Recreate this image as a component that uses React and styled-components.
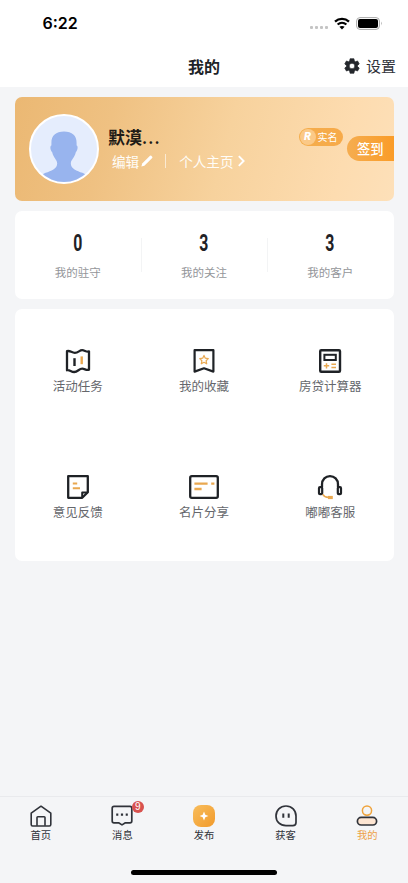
import styled, { createGlobalStyle } from 'styled-components'

const GlobalStyle = createGlobalStyle`
  * {
    box-sizing: border-box;
  }
  body {
    margin: 0;
    background: #f4f5f7;
    font-family: 'Noto Sans CJK SC', sans-serif;
  }
`

const stats = [
  { value: 0, label: '我的驻守' },
  { value: 3, label: '我的关注' },
  { value: 3, label: '我的客户' },
]

const MapIcon = () => (
  <svg width='26' height='26' viewBox='0 0 26 26' fill='none' strokeLinejoin='round'>
    <path
      d='M2 3.2C5 2.2 6.6 4.8 9.8 4.8 13.6 4.8 14.2 2.2 17.2 2.2 19.8 2.2 21.4 4.4 24 3.4V21.6C21.4 22.8 19.8 20.6 17.2 20.6 14 20.6 12.8 24 9.2 24 6 24 4.6 21.4 2 22.2Z'
      stroke='#1f2226'
      strokeWidth='2.3'
    />
    <path d='M9.5 10.2V18' stroke='#1f2226' strokeWidth='2.4' />
    <path d='M16.7 8.4V16.2' stroke='#e9a850' strokeWidth='2.4' />
  </svg>
)

const BookmarkIcon = () => (
  <svg width='26' height='26' viewBox='0 0 26 26' fill='none' strokeLinejoin='round'>
    <path d='M3.6 2.2H22.4V23.6L13 20.3 3.6 23.6Z' stroke='#1f2226' strokeWidth='2.2' />
    <path
      d='M13 7.4L14.3 10.2 17.3 10.6 15.1 12.7 15.7 15.8 13 14.3 10.3 15.8 10.9 12.7 8.7 10.6 11.7 10.2Z'
      stroke='#e9a850'
      strokeWidth='1.2'
    />
  </svg>
)

const CalculatorIcon = () => (
  <svg width='26' height='26' viewBox='0 0 26 26' fill='none'>
    <rect x='3.2' y='2.2' width='19.8' height='21.6' rx='1' stroke='#1f2226' strokeWidth='2.4' />
    <rect x='7.4' y='6.8' width='11.4' height='5.2' stroke='#1f2226' strokeWidth='2' />
    <path d='M6.8 17.8H12.2M9.5 15.2V20.4M14.4 16.2H19M14.4 19.6H19' stroke='#e9a850' strokeWidth='1.5' />
  </svg>
)

const NoteIcon = () => (
  <svg width='26' height='26' viewBox='0 0 26 26' fill='none' strokeLinejoin='round'>
    <path d='M3.2 2.2H22.8V18.2L17.2 23.8H3.2Z' stroke='#1f2226' strokeWidth='2.3' />
    <path d='M17.2 23.6V18.4H22.6' stroke='#1f2226' strokeWidth='2' />
    <path d='M7.8 9.6H12.2M7.8 14.2H15' stroke='#e9a850' strokeWidth='2' />
  </svg>
)

const CardIcon = () => (
  <svg width='32' height='26' viewBox='0 0 32 26' fill='none'>
    <rect x='2.2' y='2.2' width='27.6' height='21.6' rx='1.6' stroke='#1f2226' strokeWidth='2.3' />
    <path d='M6.4 9.6H19.6M23.2 9.6H26.4M6.4 15H13.6' stroke='#e9a850' strokeWidth='2.3' />
  </svg>
)

const HeadsetIcon = () => (
  <svg width='26' height='26' viewBox='0 0 26 26' fill='none' strokeLinejoin='round'>
    <path d='M5 13.2V10.4C5 5.4 8.6 2.1 13 2.1S21 5.4 21 10.4V13.2' stroke='#1f2226' strokeWidth='2.3' />
    <rect x='2' y='13.2' width='3.2' height='7' rx='1' stroke='#1f2226' strokeWidth='2.2' />
    <rect x='20.8' y='13.2' width='3.2' height='7' rx='1' stroke='#1f2226' strokeWidth='2.2' />
    <path d='M5.8 20.4C7 22.6 9 23.4 11.4 23.4' stroke='#e9a850' strokeWidth='1.6' />
    <rect x='11' y='21.9' width='4.8' height='3.2' fill='#e9a850' />
  </svg>
)

const services = [
  { Icon: MapIcon, label: '活动任务' },
  { Icon: BookmarkIcon, label: '我的收藏' },
  { Icon: CalculatorIcon, label: '房贷计算器' },
  { Icon: NoteIcon, label: '意见反馈' },
  { Icon: CardIcon, label: '名片分享' },
  { Icon: HeadsetIcon, label: '嘟嘟客服' },
]

const HomeIcon = () => (
  <svg width='24' height='24' viewBox='0 0 24 24' fill='none' stroke='#30333a' strokeWidth='1.6' strokeLinejoin='round'>
    <path d='M2.2 9.2L12 2.2 21.8 9.2V20.6Q21.8 22 20.4 22H3.6Q2.2 22 2.2 20.6Z' />
    <path d='M8 21.8V13.6Q8 12.8 8.8 12.8H15.2Q16 12.8 16 13.6V21.8' />
  </svg>
)

const MessageIcon = () => (
  <svg width='24' height='24' viewBox='0 0 24 24' fill='none' stroke='#30333a' strokeLinejoin='round'>
    <path
      d='M4 2.4H20Q21.8 2.4 21.8 4.2V17Q21.8 18.8 20 18.8H15.4L12 20.9 8.6 18.8H4Q2.2 18.8 2.2 17V4.2Q2.2 2.4 4 2.4Z'
      strokeWidth='1.7'
    />
    <path d='M6.2 10.6H8.3M10.9 10.6H13.1M15.7 10.6H17.8' strokeWidth='2.1' />
  </svg>
)

const PublishIcon = () => (
  <svg width='24' height='24' viewBox='0 0 24 24'>
    <defs>
      <linearGradient id='publish' x1='0' y1='0' x2='1' y2='1'>
        <stop offset='0' stopColor='#f8bd5c' />
        <stop offset='1' stopColor='#f19a2b' />
      </linearGradient>
    </defs>
    <rect x='1' y='1' width='22' height='22' rx='8' fill='url(#publish)' />
    <path d='M12 7.6L13.3 10.7 16.4 12 13.3 13.3 12 16.4 10.7 13.3 7.6 12 10.7 10.7Z' fill='#fff' />
  </svg>
)

const GhostIcon = () => (
  <svg width='24' height='24' viewBox='0 0 24 24' fill='none' stroke='#30333a' strokeLinejoin='round'>
    <path
      d='M12 2C17.8 2 22 6.2 22 12V18.4Q22 21.6 18.8 21.6H12C6 21.6 2 17.6 2 12S6.2 2 12 2Z'
      strokeWidth='1.7'
    />
    <path d='M9.3 9.6V13.8M14.7 9.6V13.8' strokeWidth='2' />
  </svg>
)

const MineIcon = () => (
  <svg width='24' height='24' viewBox='0 0 24 24' fill='none'>
    <circle cx='12' cy='6.6' r='4.6' stroke='#efa33c' strokeWidth='1.5' />
    <rect x='2.4' y='13.4' width='19.2' height='7.6' rx='3.8' fill='#fde5d2' stroke='#30333a' strokeWidth='1.7' />
  </svg>
)

const tabs = [
  { Icon: HomeIcon, label: '首页' },
  { Icon: MessageIcon, label: '消息', badge: 9 },
  { Icon: PublishIcon, label: '发布' },
  { Icon: GhostIcon, label: '获客' },
  { Icon: MineIcon, label: '我的', active: true },
]

const App = () => {
  return (
    <Container>
      <GlobalStyle />
      <Header>
        <StatusBar>
          <Time>6:22</Time>
          <StatusIcons>
            <Signal>
              <Dot />
              <Dot />
              <Dot />
              <Dot />
            </Signal>
            <svg width='16' height='13' viewBox='0 0 16 13' fill='none' stroke='#000'>
              <path d='M1 4.6C5 .9 11 .9 15 4.6' strokeWidth='2.3' />
              <path d='M3.6 7.5C6.2 5.2 9.8 5.2 12.4 7.5' strokeWidth='2.1' />
              <path d='M8 12.4L5.4 9.8C6.9 8.6 9.1 8.6 10.6 9.8Z' fill='#000' stroke='none' />
            </svg>
            <svg width='27' height='13' viewBox='0 0 27 13' fill='none'>
              <rect x='.6' y='.6' width='22.8' height='11.8' rx='3.4' stroke='#a9a9a9' />
              <rect x='2' y='2' width='20' height='9' rx='2' fill='#000' />
              <path d='M25 4.6Q26.6 6.4 25 8.4Z' fill='#a9a9a9' />
            </svg>
          </StatusIcons>
        </StatusBar>
        <NavBar>
          <Title>我的</Title>
          <Settings>
            <svg width='18' height='18' viewBox='0 0 24 24' fill='#24272c'>
              <path
                d='M19.4 13a7.5 7.5 0 0 0 0-2l2.2-1.7-2.2-4-2.7 1.1a7.6 7.6 0 0 0-1.7-1L14.6 2.4H9.4L9 5.4a7.6 7.6 0 0 0-1.7 1L4.6 5.3l-2.2 4L4.6 11a7.5 7.5 0 0 0 0 2l-2.2 1.7 2.2 4 2.7-1.1a7.6 7.6 0 0 0 1.7 1l.4 3h5.2l.4-3a7.6 7.6 0 0 0 1.7-1l2.7 1.1 2.2-4ZM12 15.8a3.8 3.8 0 1 1 0-7.6 3.8 3.8 0 0 1 0 7.6Z'
                stroke='#24272c'
                strokeLinejoin='round'
              />
            </svg>
            设置
          </Settings>
        </NavBar>
      </Header>

      <Content>
        <Profile>
          <Avatar>
            <svg width='66' height='66' viewBox='0 0 66 66'>
              <path
                d='M20.4 27C20.2 19.5 25 15.6 33 15.6S45.8 19.5 45.6 27V29.5C47.4 30 46.6 34.6 44.8 36.2 43.6 41.6 40 43.6 39.8 47.4 39.8 52.6 46 54.8 51.4 56.8 54 57.8 57 59.6 58 66H8C9 59.6 12 57.8 14.6 56.8 20 54.8 26.2 52.6 26.2 47.4 26 43.6 22.4 41.6 21.2 36.2 19.4 34.6 18.6 30 20.4 29.5Z'
                fill='#98b4ee'
              />
            </svg>
          </Avatar>
          <Details>
            <Name>默漠<Ellipsis>...</Ellipsis></Name>
            <Links>
              <Link>
                编辑
                <svg width='12' height='12' viewBox='0 0 12 12' fill='#fff'>
                  <path d='M.4 11.6L1.2 8.6 9 .8Q9.6.3 10.3.8L11.2 1.7Q11.7 2.4 11.2 3L3.4 10.8Z' />
                </svg>
              </Link>
              <Separator />
              <Link>
                个人主页
                <svg width='12' height='12' viewBox='0 0 12 12' fill='none' stroke='#fff' strokeWidth='1.9'>
                  <path d='M3.8 1.2L8.6 6 3.8 10.8' />
                </svg>
              </Link>
            </Links>
          </Details>
          <RealName>
            <RealMark>R</RealMark>
            实名
          </RealName>
          <SignIn>签到</SignIn>
        </Profile>

        <Stats>
          {stats.map((item) => (
            <Stat key={item.label}>
              <StatValue>{item.value}</StatValue>
              <StatLabel>{item.label}</StatLabel>
            </Stat>
          ))}
        </Stats>

        <Services>
          {services.map(({ Icon, label }) => (
            <Service key={label}>
              <Icon />
              <ServiceLabel>{label}</ServiceLabel>
            </Service>
          ))}
        </Services>
      </Content>

      <Footer>
        <Tabs>
          {tabs.map(({ Icon, label, badge, active }) => (
            <Tab key={label} $active={active}>
              <TabIcon>
                <Icon />
                {badge && <Badge>{badge}</Badge>}
              </TabIcon>
              {label}
            </Tab>
          ))}
        </Tabs>
        <HomeIndicator />
      </Footer>
    </Container>
  )
}

const Container = styled.div`
  display: flex;
  flex-direction: column;
  width: 408px;
  height: 883px;
  overflow: hidden;
  background: #f4f5f7;
`

const Header = styled.header`
  height: 87px;
  background: #fff;
`

const StatusBar = styled.div`
  display: flex;
  align-items: center;
  justify-content: space-between;
  height: 46px;
  padding: 0 25px 0 42.5px;
`

const Time = styled.span`
  font-family: Inter, sans-serif;
  font-size: 16px;
  font-weight: 600;
  color: #000;
`

const StatusIcons = styled.div`
  display: flex;
  align-items: center;
  gap: 6px;
`

const Signal = styled.div`
  display: flex;
  gap: 2px;
  margin-top: 9px;
`

const Dot = styled.span`
  width: 3px;
  height: 3px;
  border-radius: 1px;
  background: #c4c4c4;
`

const NavBar = styled.div`
  display: grid;
  grid-template-columns: 1fr auto 1fr;
  align-items: center;
  height: 40px;
  padding: 0 12px;
`

const Title = styled.h1`
  grid-column: 2;
  margin: 0;
  font-size: 16px;
  font-weight: 700;
  line-height: 24px;
  color: #202328;
`

const Settings = styled.div`
  display: flex;
  align-items: center;
  justify-content: flex-end;
  gap: 5px;
  font-size: 15px;
  line-height: 22px;
  color: #30333a;
`

const Content = styled.main`
  flex: 1;
  display: flex;
  flex-direction: column;
  gap: 9.5px;
  padding: 9.5px 14.5px 0;
`

const Profile = styled.section`
  display: flex;
  height: 104.5px;
  padding-left: 14.5px;
  border-radius: 7px;
  background: linear-gradient(105deg, #ebb873 0%, #efc182 25%, #f7d29d 55%, #fddcb0 85%, #fde0b9 100%);
`

const Avatar = styled.div`
  width: 70px;
  height: 70px;
  margin-top: 17.5px;
  border: 2px solid #fff;
  border-radius: 50%;
  background: #e5edfd;
  overflow: hidden;
`

const Details = styled.div`
  flex: 1;
  padding: 28px 0 0 9px;
`

const Name = styled.div`
  font-size: 17px;
  font-weight: 700;
  line-height: 24px;
  color: #1f1b16;
`

const Ellipsis = styled.span`
  font-weight: 500;
  letter-spacing: 1.2px;
`

const Links = styled.div`
  display: flex;
  align-items: center;
  margin-top: 1px;
  padding-left: 4px;
`

const Link = styled.span`
  display: flex;
  align-items: center;
  gap: 1.5px;
  font-size: 13.6px;
  line-height: 23px;
  color: #fffdf8;
`

const Separator = styled.span`
  width: 1px;
  height: 14px;
  margin: 0 13.5px 0 12px;
  background: #fff9;
`

const RealName = styled.div`
  display: flex;
  align-items: center;
  gap: 2px;
  height: 18px;
  margin: 31.5px 4px 0 0;
  padding: 0 5.5px 1px 1px;
  border-radius: 9px;
  background: linear-gradient(90deg, #f4ad4c, #f7aa49);
  font-size: 10px;
  color: #fff;
`

const RealMark = styled.span`
  width: 16px;
  height: 16px;
  margin-top: 1px;
  border-radius: 50%;
  background: #fbc987;
  font-family: Inter, sans-serif;
  font-size: 10.5px;
  font-weight: 800;
  font-style: italic;
  line-height: 16px;
  text-align: center;
`

const SignIn = styled.div`
  width: 46.5px;
  height: 25px;
  margin-top: 39.5px;
  padding-left: 10px;
  border-radius: 12.5px 0 0 12.5px;
  background: linear-gradient(90deg, #f5ad50, #fa9c28);
  font-size: 13.3px;
  font-weight: 500;
  line-height: 25px;
  color: #fff;
`

const Stats = styled.section`
  display: grid;
  grid-template-columns: repeat(3, 1fr);
  align-items: center;
  height: 88.5px;
  border-radius: 7px;
  background: #fff;
`

const Stat = styled.div`
  display: flex;
  flex-direction: column;
  align-items: center;

  & + & {
    background: linear-gradient(#f3f4f5, #f3f4f5) left center / 1px 34px no-repeat;
  }
`

const StatValue = styled.span`
  font-family: Roboto, sans-serif;
  font-size: 24px;
  font-weight: 700;
  line-height: 30px;
  color: #1f2226;
  transform: scaleX(0.66);
`

const StatLabel = styled.span`
  margin-top: 5px;
  font-size: 11.5px;
  line-height: 18px;
  color: #94969a;
`

const Services = styled.section`
  display: grid;
  grid-template-columns: repeat(3, 1fr);
  grid-auto-rows: 126.3px;
  border-radius: 7px;
  background: #fff;
`

const Service = styled.div`
  display: flex;
  flex-direction: column;
  align-items: center;
  padding-top: 39px;
`

const ServiceLabel = styled.span`
  margin-top: 2px;
  font-size: 12.5px;
  line-height: 20px;
  color: #65676c;
`

const Footer = styled.footer`
  height: 87px;
  border-top: 1px solid #e9eaed;
`

const Tabs = styled.nav`
  display: grid;
  grid-template-columns: repeat(5, 1fr);
  height: 73px;
  padding-top: 7px;
`

const Tab = styled.div`
  display: flex;
  flex-direction: column;
  align-items: center;
  font-size: 10.3px;
  line-height: 13px;
  color: ${(props) => (props.$active ? '#eda145' : '#30333a')};
`

const TabIcon = styled.div`
  position: relative;
  height: 24px;
`

const Badge = styled.span`
  position: absolute;
  top: -3.5px;
  right: -9.5px;
  width: 12px;
  height: 12px;
  border-radius: 50%;
  background: #d8524f;
  font-family: 'Liberation Sans', sans-serif;
  font-size: 10px;
  line-height: 12px;
  text-align: center;
  color: #fff;
`

const HomeIndicator = styled.div`
  width: 146px;
  height: 5px;
  margin: 0 auto;
  border-radius: 3px;
  background: #000;
`

export default App
